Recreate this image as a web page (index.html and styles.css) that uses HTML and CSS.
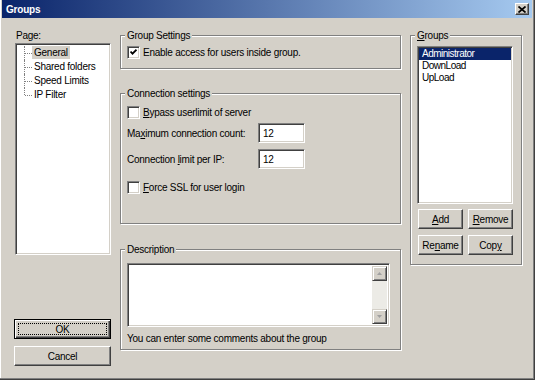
FILE: index.html
```html
<!DOCTYPE html>
<html lang="en">
<head>
    <meta charset="UTF-8">
    <title>Groups</title>
    <link rel="stylesheet" href="styles.css">
</head>
<body>
<div class="window">
    <div class="titlebar">
        <span class="title">Groups</span>
        <span class="close-btn">
            <svg width="8" height="7" viewBox="0 0 8 7"><path d="M0.5 0.5 L7.5 6.5 M7.5 0.5 L0.5 6.5" stroke="#000" stroke-width="1.7"/></svg>
        </span>
    </div>

    <div class="client">
        <div class="col-left">
            <div class="caption">Page:</div>
            <ul class="tree">
                <li class="selected"><span>General</span></li>
                <li><span>Shared folders</span></li>
                <li><span>Speed Limits</span></li>
                <li class="last"><span>IP Filter</span></li>
            </ul>
            <div class="dialog-buttons">
                <button class="btn btn-default">OK</button>
                <button class="btn">Cancel</button>
            </div>
        </div>

        <div class="col-mid">
            <fieldset class="group group-settings">
                <legend>Group Settings</legend>
                <label class="check-row first">
                    <span class="checkbox">
                        <svg width="7" height="7" viewBox="0 0 7 7"><path d="M0.5 2.5 L2.5 4.7 L6.5 0.7" fill="none" stroke="#000" stroke-width="1.8"/></svg>
                    </span>
                    Enable access for users inside group.
                </label>
            </fieldset>

            <fieldset class="group group-conn">
                <legend>Connection settings</legend>
                <label class="check-row first"><span class="checkbox"></span><span><u>B</u>ypass userlimit of server</span></label>
                <div class="field-row max-row">
                    <span class="field-label">Ma<u>x</u>imum connection count:</span>
                    <span class="edit">12</span>
                </div>
                <div class="field-row ip-row">
                    <span class="field-label">Connection <u>l</u>imit per IP:</span>
                    <span class="edit">12</span>
                </div>
                <label class="check-row ssl-row"><span class="checkbox"></span><span><u>F</u>orce SSL for user login</span></label>
            </fieldset>

            <fieldset class="group group-desc">
                <legend>Description</legend>
                <div class="memo">
                    <div class="memo-text"></div>
                    <div class="scrollbar">
                        <span class="sb-btn">
                            <svg width="5" height="3" viewBox="0 0 5 3"><path d="M2.5 0 L5 3 L0 3 Z" fill="#a0a0a0"/></svg>
                        </span>
                        <span class="sb-track"></span>
                        <span class="sb-btn">
                            <svg width="5" height="3" viewBox="0 0 5 3"><path d="M0 0 L5 0 L2.5 3 Z" fill="#a0a0a0"/></svg>
                        </span>
                    </div>
                </div>
                <div class="note">You can enter some comments about the group</div>
            </fieldset>
        </div>

        <div class="col-right">
            <fieldset class="group group-list">
                <legend><u>G</u>roups</legend>
                <ul class="listbox">
                    <li class="active">Administrator</li>
                    <li>DownLoad</li>
                    <li>UpLoad</li>
                </ul>
                <div class="btn-grid">
                    <button class="btn btn-small"><u>A</u>dd</button>
                    <button class="btn btn-small"><u>R</u>emove</button>
                    <button class="btn btn-small">Re<u>n</u>ame</button>
                    <button class="btn btn-small">Cop<u>y</u></button>
                </div>
            </fieldset>
        </div>
    </div>
</div>
</body>
</html>
```

FILE: styles.css
```css
* { box-sizing: border-box; }
body {
    margin: 0; background: #fff;
    font-family: "Liberation Sans", Arial, sans-serif;
    font-size: 10px; letter-spacing: -0.25px; color: #000;
}
u { text-decoration: underline; text-underline-offset: 1px; }

.window {
    width: 535px; height: 380px;
    background: #d4d0c8;
    border-right: 1px solid #404040; border-bottom: 1px solid #404040;
    box-shadow: inset -1px -1px 0 #808080, inset 1px 0 0 #fff;
    padding: 0 2px 2px 2px;
    display: flex; flex-direction: column;
}
.titlebar {
    height: 18px; flex-shrink: 0;
    background: linear-gradient(90deg, #0a246a, #a6caf0);
    display: flex; align-items: center; justify-content: space-between;
    padding: 0 3px 0 4px;
}
.title { color: #fff; font-weight: bold; font-size: 10px; letter-spacing: -0.2px; }
.close-btn {
    width: 14px; height: 12px; background: #d4d0c8;
    border: 1px solid; border-color: #fff #404040 #404040 #fff;
    box-shadow: inset -1px -1px 0 #808080;
    display: flex; align-items: center; justify-content: center;
}

.client { flex: 1; display: flex; padding: 11px 0 0 12px; }
.col-left { width: 97px; margin-right: 9px; display: flex; flex-direction: column; }
.col-mid { width: 281px; margin-right: 9px; display: flex; flex-direction: column; }
.col-right { width: 112px; }

.caption { line-height: 13px; padding-left: 2px; }

/* sunken white controls */
.tree, .listbox, .edit, .memo, .checkbox {
    background: #fff;
    border: 1px solid; border-color: #808080 #fff #fff #808080;
    box-shadow: inset 1px 1px 0 #404040, inset -1px -1px 0 #d4d0c8;
}

.tree {
    list-style: none; margin: 1px 0 0 1px; padding: 2px 0 0 2px;
    width: 96px; height: 212px;
}
.tree li { position: relative; height: 14px; line-height: 14px; padding-left: 14px; }
.tree li span { padding: 1px 2px; }
.tree li.selected span { background: #d4d0c8; }
.tree li::before {
    content: ""; position: absolute; left: 6px; top: 0; bottom: 0;
    border-left: 1px dotted #808080;
}
.tree li.last::before { bottom: 7px; }
.tree li::after {
    content: ""; position: absolute; left: 7px; top: 7px; width: 7px;
    border-top: 1px dotted #808080;
}

.dialog-buttons { margin-top: 64px; display: flex; flex-direction: column; gap: 7px; }

.btn {
    font: inherit; letter-spacing: inherit; color: #000;
    height: 20px; padding: 0; background: #d4d0c8;
    border: 1px solid; border-color: #fff #404040 #404040 #fff;
    box-shadow: inset -1px -1px 0 #808080;
    display: flex; align-items: center; justify-content: center;
}
.btn-default {
    border-color: #000;
    box-shadow: inset 1px 1px 0 #fff, inset -1px -1px 0 #404040, inset -2px -2px 0 #808080;
    outline: 1px dotted #000; outline-offset: -5px;
}

.group {
    margin: 0; min-width: 0;
    padding: 0 6px;
    border: 1px solid #808080;
    box-shadow: inset 1px 1px 0 #fff, 1px 1px 0 #fff;
}
.group legend {
    padding: 0 2px; margin-left: -2px;
    line-height: 13px; background: #d4d0c8;
}
.group-settings { height: 40px; }
.group-conn { height: 137px; margin-top: 18px; }
.group-desc { height: 107px; margin-top: 19px; }
.group-list { height: 236px; }

.check-row { display: flex; align-items: center; gap: 3px; height: 13px; }
.check-row.first { margin-top: 4px; }
.group-conn .check-row.first { margin-top: 6px; }
.checkbox {
    width: 13px; height: 13px; flex-shrink: 0;
    display: flex; align-items: center; justify-content: center;
}

.field-row { display: flex; align-items: center; height: 20px; }
.max-row { margin-top: 4px; }
.ip-row { margin-top: 6px; }
.ssl-row { margin-top: 12px; }
.field-label { width: 131px; }
.edit { width: 47px; height: 20px; padding: 3px 0 0 4px; line-height: 13px; }

.memo { margin-top: 7px; width: 263px; height: 64px; display: flex; padding: 2px; }
.memo-text { flex: 1; }
.scrollbar { width: 15px; display: flex; flex-direction: column; background: #ecebe6; }
.sb-btn {
    height: 15px; background: #d4d0c8;
    border: 1px solid; border-color: #d4d0c8 #404040 #404040 #d4d0c8;
    box-shadow: inset 1px 1px 0 #fff, inset -1px -1px 0 #808080;
    display: flex; align-items: center; justify-content: center;
}
.sb-track { flex: 1; }
.note { margin-top: 5px; line-height: 13px; }

.listbox {
    list-style: none; margin: 4px 0 0 0; padding: 1px;
    width: 96px; height: 158px;
}
.listbox li { line-height: 12px; height: 12px; padding-left: 3px; letter-spacing: -0.5px; }
.listbox li.active { background: #0a246a; color: #fff; }

.btn-grid {
    margin: 5px 0 0 1px;
    display: grid; grid-template-columns: 45px 45px; column-gap: 5px; row-gap: 6px;
}
```
